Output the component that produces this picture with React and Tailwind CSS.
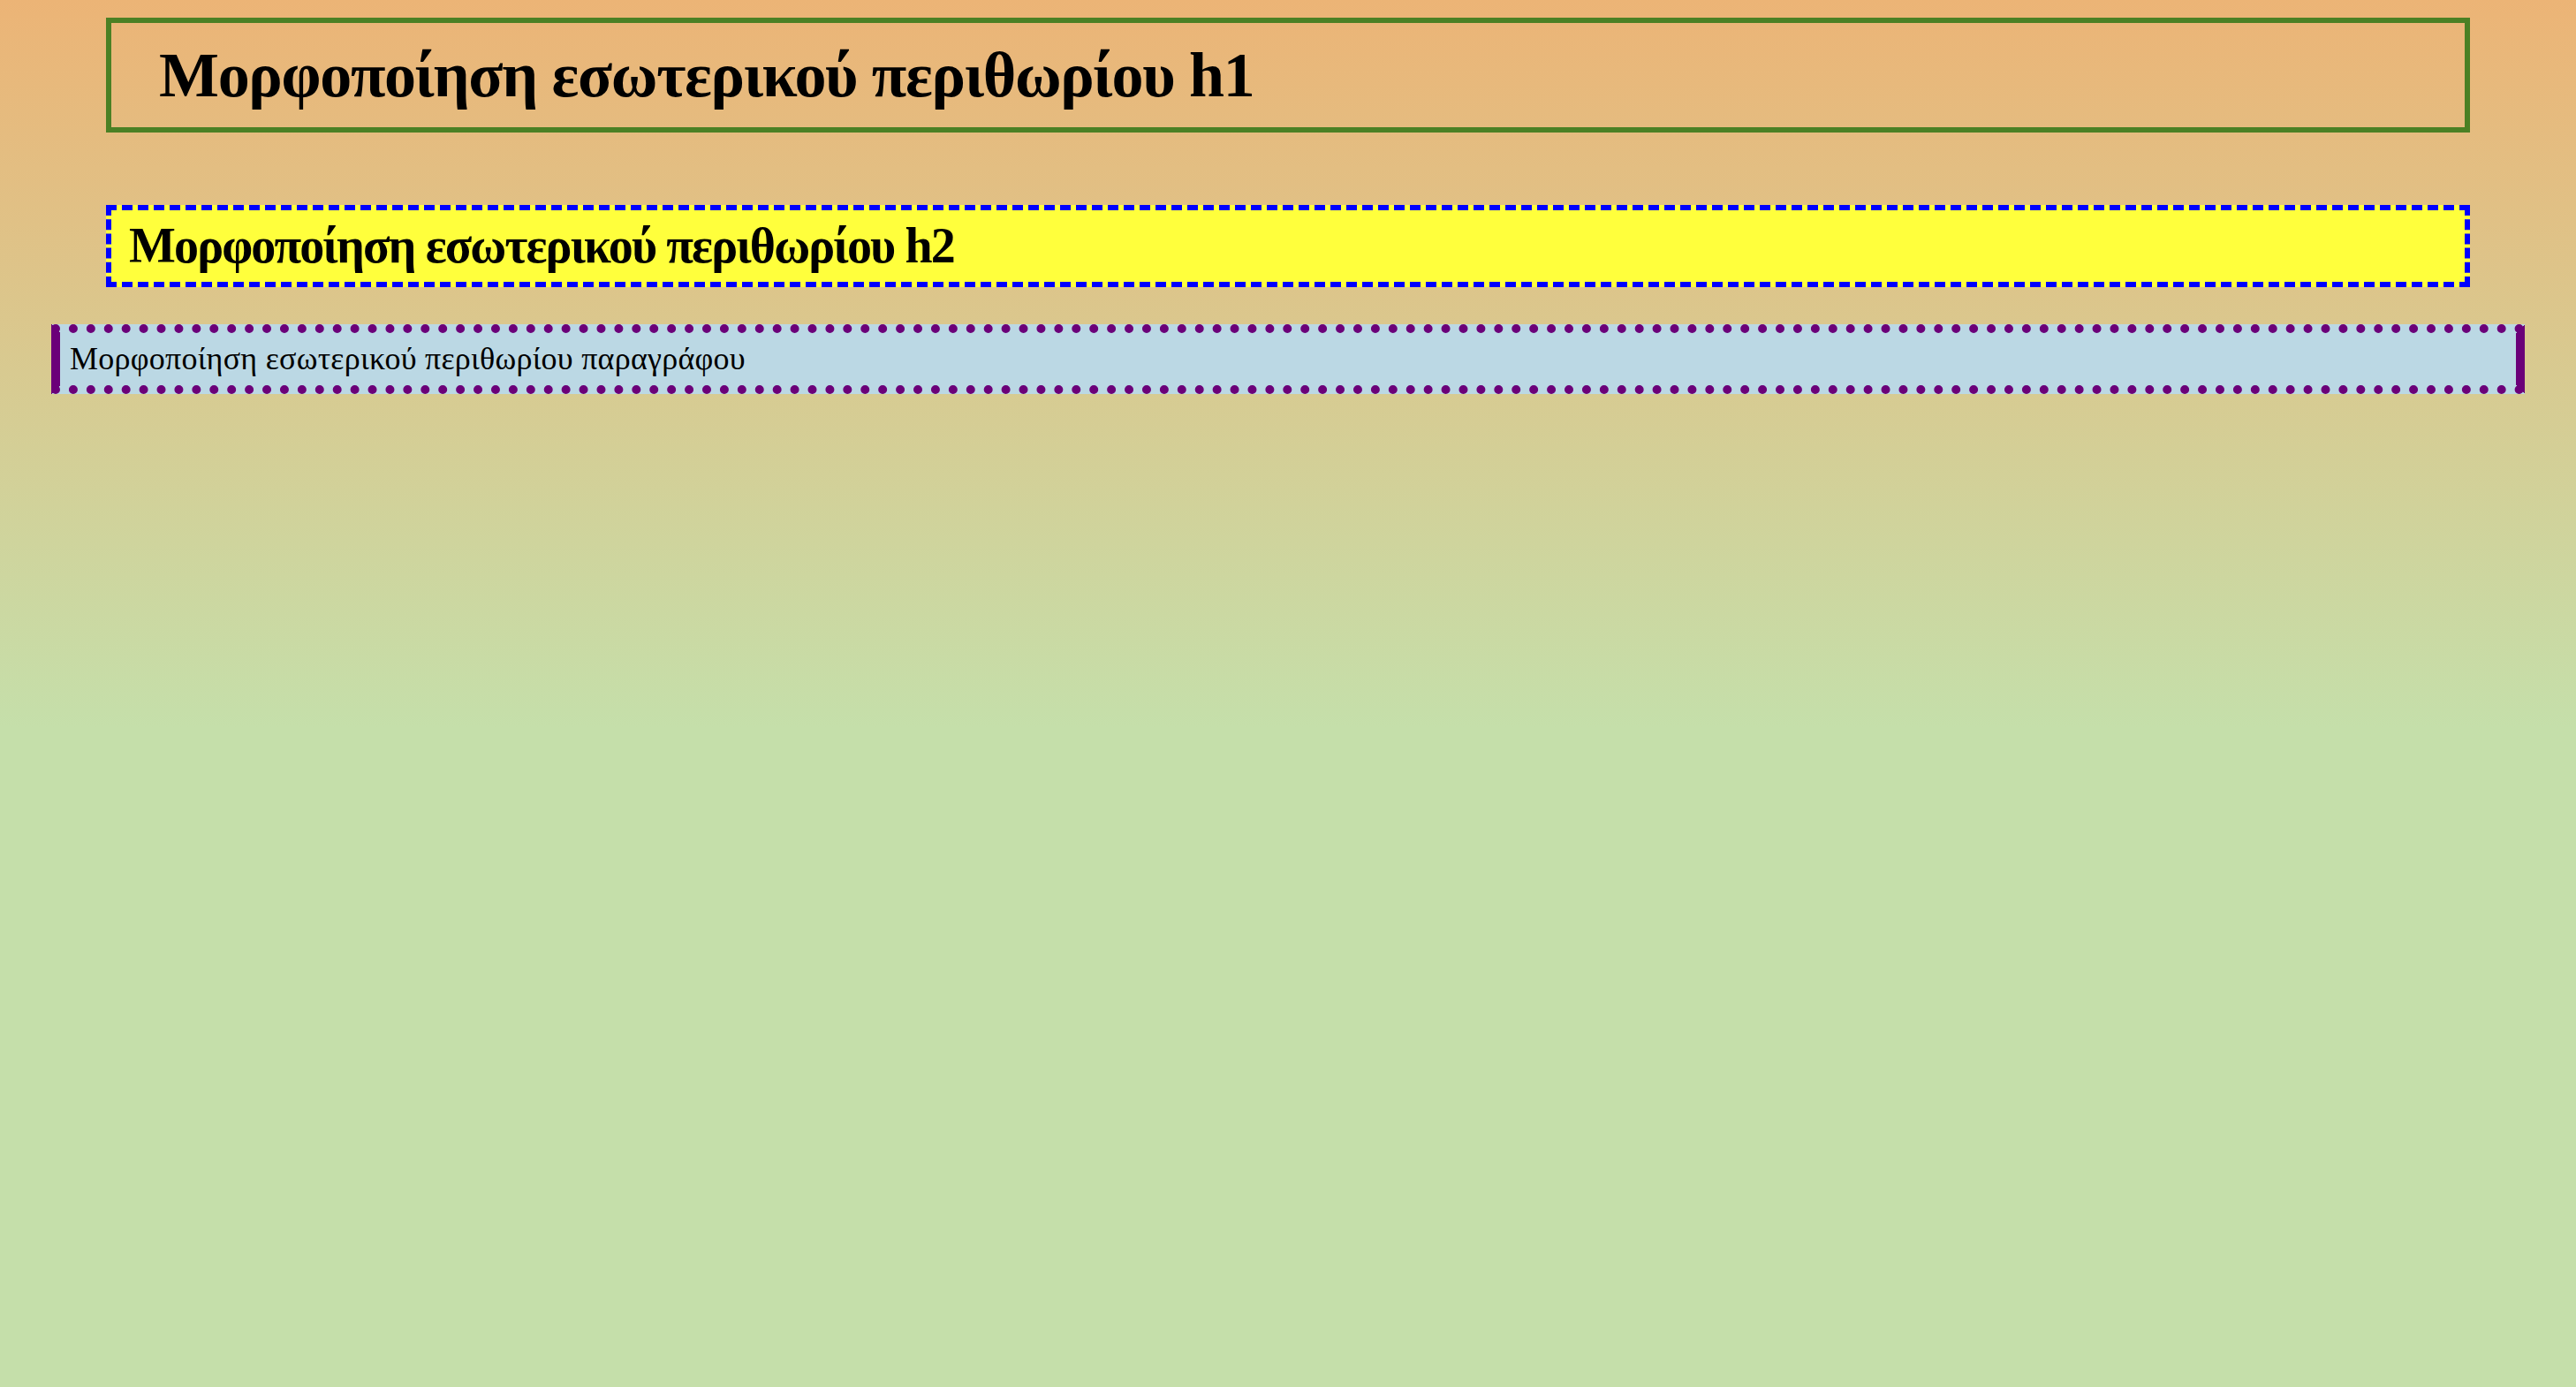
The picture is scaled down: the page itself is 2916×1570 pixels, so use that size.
export default function App() {
  return (
    <div
      className="min-h-screen w-full overflow-hidden bg-[linear-gradient(to_bottom,#ecb476_0px,#c5dfaa_823px)] pt-[20px] text-black"
      style={{ fontFamily: '"Liberation Serif", "Times New Roman", serif' }}
    >
      <h1 className="mx-[120px] border-[6px] border-solid border-[#4b8024] py-[18px] pl-[54px] text-[72px] font-bold leading-[82px] tracking-[-1.3px]">
        Μορφοποίηση εσωτερικού περιθωρίου h1
      </h1>
      <h2 className="mx-[120px] mt-[82px] border-[6px] border-dashed border-[#0000ff] bg-[#ffff3c] py-[10px] pl-[20px] text-[56px] font-bold leading-[61px] tracking-[-1.85px]">
        Μορφοποίηση εσωτερικού περιθωρίου h2
      </h2>
      <p className="mx-[58px] mt-[42px] border-[10px] border-dotted border-[#6b0079] bg-[#bbd8e4] py-[9px] pl-[11px] text-[36px] leading-[41px] tracking-[0.25px] [border-left-style:solid] [border-right-style:solid]">
        Μορφοποίηση εσωτερικού περιθωρίου παραγράφου
      </p>
    </div>
  );
}
